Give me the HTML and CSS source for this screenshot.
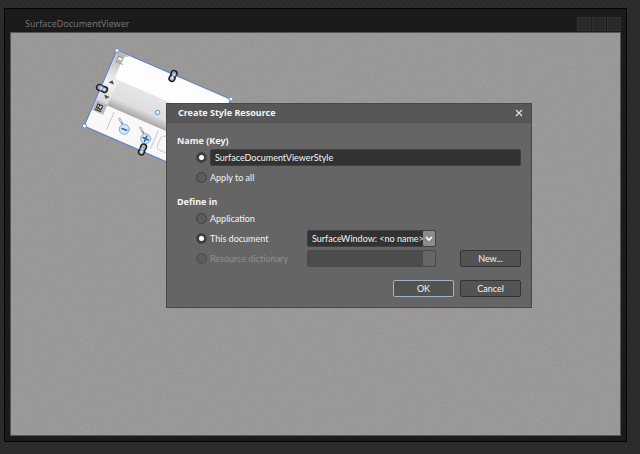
FILE: index.html
```html
<!DOCTYPE html>
<html lang="en">
<head>
<meta charset="utf-8">
<title>SurfaceDocumentViewer</title>
<link rel="stylesheet" href="styles.css">
</head>
<body>
<main class="window">
  <header class="window-bar">
    <span class="window-title">SurfaceDocumentViewer</span>
    <span class="window-buttons"><i></i><i></i><i></i></span>
  </header>
  <section class="canvas">
    <svg class="grain" aria-hidden="true">
      <filter id="grain"><feTurbulence type="fractalNoise" baseFrequency="0.35" numOctaves="2"/><feColorMatrix type="saturate" values="0"/></filter>
      <rect width="100%" height="100%" filter="url(#grain)"/>
    </svg>
    <svg class="viewer" viewBox="70 35 170 130" width="170" height="130" aria-hidden="true">
      <defs>
        <linearGradient id="page" x1="0" y1="0" x2="0" y2="1"><stop offset="0" stop-color="#e6e6e6"/><stop offset=".65" stop-color="#dedede"/><stop offset="1" stop-color="#a6a6a6"/></linearGradient>
        <linearGradient id="side" x1="0" y1="0" x2="0" y2="1"><stop offset="0" stop-color="#b4b4b4"/><stop offset=".5" stop-color="#f4f4f4"/><stop offset="1" stop-color="#c6c6c6"/></linearGradient>
        <g id="link">
          <g fill="#bbb" stroke="#222" stroke-width="1.600">
            <rect x="-2.800" y="-5.500" width="5.600" height="6" rx="2.500"/>
            <rect x="-2.800" y="-.500" width="5.600" height="6" rx="2.500"/>
          </g>
          <path d="M0-1v4" stroke="#fff" stroke-width="1.400"/>
        </g>
      </defs>
      <g transform="translate(117 50) rotate(23.4)">
        <rect width="124" height="83" fill="#fafafa"/>
        <rect x="1" y="1" width="12" height="65" fill="url(#side)"/>
        <rect x="13" y="27" width="111" height="28" fill="url(#page)"/>
        <path d="M13 2h111v25H9V6q0-4 4-4z" fill="#fdfdfd"/>
        <path d="M1 55h123v28H1z" fill="#f8f8f8"/>
        <path d="M1 54h12v11H1z" fill="#b9b9b9"/>
        <path d="M4 5h5v4H4zM3 11h8" fill="#eee" stroke="#888" stroke-width=".8"/>
        <path d="M5 33l3-3.500 3 3.500zM6 46h6l-3 3.500z" fill="#555"/>
        <path d="M4 57h5v4H4zM3 63h7M6 57v4" fill="#ddd" stroke="#222"/>
        <path d="M22 58v19M70 58v19" stroke="#c8c8c8"/>
        <rect x="75" y="60" width="16" height="15" rx="4" fill="none" stroke="#ccc"/>
        <rect width="124" height="83" fill="none" stroke="#5d83c9" stroke-width="1.2"/>
      </g>
      <g fill="none" stroke-linecap="round">
        <path d="M119.500 119l3 5M140.500 128l3 5" stroke="#999" stroke-width="2.200"/>
        <path d="M119.500 119l2 3M140.500 128l2 3" stroke="#eee" stroke-width="1"/>
        <g fill="#d3e9fa" stroke="#8eabc2"><circle cx="124.300" cy="129.300" r="5"/><circle cx="145.700" cy="138.700" r="5"/></g>
        <path d="M122 128.500l4.600 1.800M143 137.500l5.400 2.400M146.900 136l-2.400 5.400" stroke="#256eb4" stroke-width="1.600"/>
      </g>
      <use href="#link" transform="translate(173 76) rotate(23)"/>
      <use href="#link" transform="translate(142.500 149.500) rotate(23)"/>
      <use href="#link" transform="translate(102 88.500) rotate(-67)"/>
      <g fill="#fff" stroke="#648ed5">
        <circle cx="117" cy="50.500" r="2"/><circle cx="231" cy="99" r="2"/><circle cx="84.500" cy="126" r="2"/>
        <circle cx="174" cy="74.500" r="1.800" fill="#c9dcf8"/><circle cx="101" cy="88" r="2.200" fill="#c9dcf8"/><circle cx="142.500" cy="149" r="1.800" fill="#c9dcf8"/>
        <circle cx="157.500" cy="112.500" r="2.200" fill="#e8eefa"/>
      </g>
    </svg>
  </section>
</main>

<form class="dialog" role="dialog" aria-labelledby="dialog-title">
  <header class="dialog-bar">
    <h1 id="dialog-title">Create Style Resource</h1>
    <button type="button" class="close" aria-label="Close"><svg viewBox="0 0 8 8" width="8" height="8"><path d="M1 1l6 6M7 1L1 7" stroke="#e4e4e4" stroke-width="1.200"/></svg></button>
  </header>
  <div class="dialog-body">
    <fieldset>
      <legend>Name (Key)</legend>
      <div class="row">
        <input type="radio" name="key" id="key-name" aria-label="Named key" checked>
        <input type="text" class="key-text" aria-label="Name (Key)" value="SurfaceDocumentViewerStyle">
      </div>
      <div class="row">
        <input type="radio" name="key" id="key-all"><label for="key-all">Apply to all</label>
      </div>
    </fieldset>
    <fieldset>
      <legend>Define in</legend>
      <div class="row">
        <input type="radio" name="scope" id="scope-app"><label for="scope-app">Application</label>
      </div>
      <div class="row">
        <input type="radio" name="scope" id="scope-doc" checked><label for="scope-doc">This document</label>
        <span class="picker">
          <select aria-label="Document"><option>SurfaceWindow: &lt;no name&gt;</option></select>
          <span class="arrow"><svg viewBox="0 0 8 6" width="8" height="6"><path d="M1 1l3 3 3-3" fill="none" stroke="#fff" stroke-width="1.600"/></svg></span>
        </span>
      </div>
      <div class="row">
        <input type="radio" name="scope" id="scope-dict" disabled><label for="scope-dict">Resource dictionary</label>
        <span class="picker off">
          <select aria-label="Dictionary" disabled></select>
          <span class="arrow"></span>
        </span>
        <button type="button" class="button new">New...</button>
      </div>
    </fieldset>
    <footer class="actions">
      <button type="submit" class="button primary">OK</button>
      <button type="button" class="button">Cancel</button>
    </footer>
  </div>
</form>
</body>
</html>
```
FILE: styles.css
```css
* { box-sizing: border-box; }

body {
  margin: 0;
  min-height: 100vh;
  padding: 8px 13px 12px 4px;
  display: flex;
  background: repeating-conic-gradient(#2a2a2a 0 25%, #2d2d2d 0 50%) 0 0 / 6px 6px;
  font: 9px/16px "Noto Sans", "Open Sans", sans-serif;
  color: #f4f4f4;
}

.window {
  flex: 1;
  display: flex;
  flex-direction: column;
  padding: 0 5px 5px;
  border: 1px solid #050505;
  background: #1b1b1b;
}

.window-bar {
  height: 23px;
  display: flex;
  justify-content: space-between;
  align-items: flex-end;
  padding-left: 15px;
}

.window-title { color: #747474; }

.window-buttons { display: flex; gap: 1px; padding-bottom: 1px; }
.window-buttons i { width: 14px; height: 14px; background: #292929; border: 1px solid #303030; }

.canvas {
  flex: 1;
  position: relative;
  overflow: hidden;
  background: #989795;
  border: 1px solid #555;
}

.grain { position: absolute; inset: 0; width: 100%; height: 100%; opacity: 0.1; }
.viewer { position: absolute; left: 59px; top: 2px; }

.dialog {
  position: absolute;
  left: 166px;
  top: 103px;
  width: 366px;
  background: #656565;
  border: 1px solid #484848;
  font-family: Lato, "Noto Sans", sans-serif;
}

.dialog-bar {
  height: 19px;
  padding: 0 8px 0 11px;
  display: flex;
  justify-content: space-between;
  align-items: center;
  background: #575757;
  border-bottom: 1px solid #505050;
}

h1, legend { font-family: "Noto Sans", "Open Sans", sans-serif; font-size: 9px; font-weight: 700; }
h1 { margin: 0; }

button { font: inherit; color: inherit; padding: 0; }
.close { display: flex; background: none; border: 0; }

.dialog-body { padding: 10px; }

fieldset { margin: 0 0 5px; padding: 0; border: 0; }
legend { padding: 0; }

.row {
  height: 17px;
  margin: 0 0 3px 19px;
  display: flex;
  align-items: center;
  gap: 3px;
}

.row label { width: 94px; white-space: nowrap; }

input[type="radio"] {
  appearance: none;
  flex: none;
  width: 11px;
  height: 11px;
  margin: 0;
  border: 1px solid #404040;
  border-radius: 50%;
  background: #5c5c5c;
}

input[type="radio"]:checked { background: radial-gradient(circle, #fff 0 2px, #404040 3px); }
input[type="radio"]:disabled { border-color: #4d4d4d; }
input[type="radio"]:disabled + label { color: #8f8f8f; }

.key-text {
  flex: 1;
  min-width: 0;
  height: 17px;
  padding: 0 4px;
  border: 1px solid #404040;
  border-radius: 2px;
  background: #323232;
  color: inherit;
  font: inherit;
}

.picker { position: relative; width: 129px; height: 17px; }

select {
  appearance: none;
  display: block;
  width: 100%;
  height: 100%;
  padding: 0 12px 0 4px;
  border: 1px solid #404040;
  border-radius: 2px;
  background: #323232;
  color: inherit;
  font: inherit;
}

.arrow {
  position: absolute;
  inset: 1px 1px 1px auto;
  width: 12px;
  display: flex;
  align-items: center;
  justify-content: center;
  border-radius: 1px;
  background: #8b8b8b;
  pointer-events: none;
}

.off select { background: #4c4c4c; border-color: #4a4a4a; opacity: 1; }
.off .arrow { background: #666; }

.button {
  width: 61px;
  height: 17px;
  line-height: 14px;
  border: 1px solid #343434;
  border-radius: 2px;
  background: #535353;
}

.new { margin-left: auto; }
.primary { border-color: #a3b5c5; }
.actions { display: flex; justify-content: flex-end; gap: 6px; margin-top: 10px; }
```
